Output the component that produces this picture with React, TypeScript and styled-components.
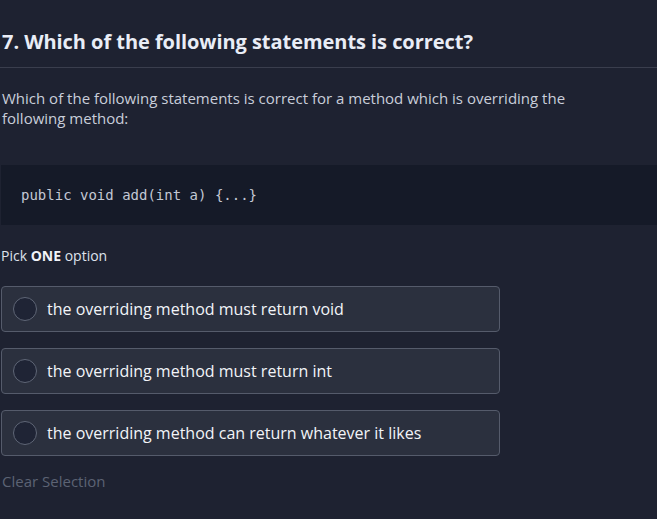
import React from "react";
import styled, { createGlobalStyle } from "styled-components";

const Global = createGlobalStyle`
  html, body { margin: 0; padding: 0; background: #1e2231; }
  body { font-family: "Open Sans", "Noto Sans", sans-serif; }
`;

const Page = styled.div`
  width: 657px;
  height: 519px;
  background: #1e2231;
  overflow: hidden;
  padding-top: 26px;
  box-sizing: border-box;
`;

const Title = styled.h1`
  margin: 0;
  padding: 0 0 0 2px;
  font-size: 20px;
  line-height: 32px;
  font-weight: 700;
  color: #e9edf6;
  letter-spacing: -0.05px;
`;

const Divider = styled.hr`
  margin: 9px 0 0 0;
  border: none;
  height: 1px;
  background: #3a3e4d;
`;

const Prompt = styled.p`
  margin: 20px 0 0 0;
  padding-left: 2px;
  font-size: 15px;
  line-height: 20px;
  color: #c9ceda;
  width: 580px;
`;

const Code = styled.pre`
  margin: 37px 0 0 1px;
  height: 60px;
  box-sizing: border-box;
  display: flex;
  align-items: center;
  padding: 0 0 0 20px;
  background: #151a28;
  font-family: "DejaVu Sans Mono", monospace;
  font-size: 14px;
  color: #c3c8d4;
`;

const Instruction = styled.div`
  margin-top: 21px;
  padding-left: 1px;
  font-size: 14px;
  line-height: 20px;
  color: #dfe3ec;
  b { font-weight: 700; color: #f1f3f8; }
`;

const Options = styled.div`
  margin-top: 20px;
  display: flex;
  flex-direction: column;
  gap: 16px;
  width: 499px;
  padding-left: 1px;
`;

const Option = styled.label`
  display: flex;
  align-items: center;
  gap: 10px;
  height: 46px;
  box-sizing: border-box;
  padding-left: 11px;
  background: #2b303e;
  border: 1px solid #555b6b;
  border-radius: 4px;
  font-size: 16px;
  color: #f2f4f8;
  cursor: pointer;
`;

const Radio = styled.span`
  width: 24px;
  height: 24px;
  box-sizing: border-box;
  border-radius: 50%;
  border: 1px solid #5f6676;
  background: #1f2435;
  flex-shrink: 0;
`;

const Clear = styled.div`
  margin-top: 15px;
  padding-left: 2px;
  font-size: 15px;
  line-height: 20px;
  color: #5c6374;
`;

const options = [
  "the overriding method must return void",
  "the overriding method must return int",
  "the overriding method can return whatever it likes",
];

export default function App() {
  return (
    <>
      <Global />
      <Page>
        <Title>7. Which of the following statements is correct?</Title>
        <Divider />
        <Prompt>
          Which of the following statements is correct for a method which is overriding the following method:
        </Prompt>
        <Code>public void add(int a) {"{...}"}</Code>
        <Instruction>
          Pick <b>ONE</b> option
        </Instruction>
        <Options>
          {options.map((o) => (
            <Option key={o}>
              <Radio />
              {o}
            </Option>
          ))}
        </Options>
        <Clear>Clear Selection</Clear>
      </Page>
    </>
  );
}
